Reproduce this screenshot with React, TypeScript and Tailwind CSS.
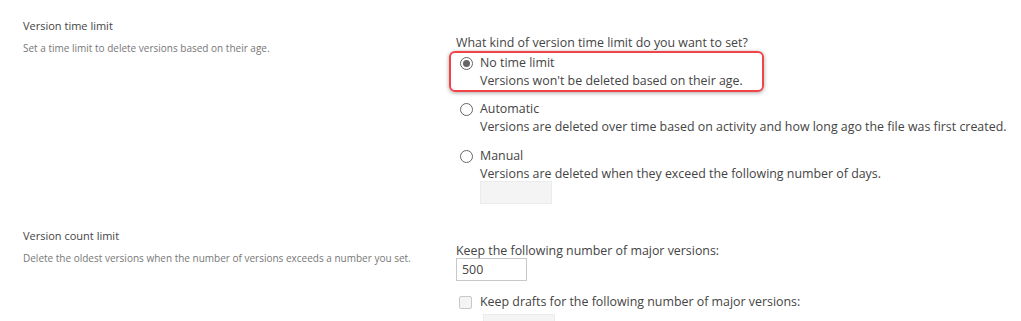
export default function App() {
  return (
    <main className="w-[1021px] h-[321px] overflow-hidden bg-white text-[#444] font-['Open_Sans',sans-serif]">
      {/* time limit section */}
      <section className="flex pt-[17px]">
        <div className="w-[456px] pl-[23px]">
          <h2 className="text-[11px] leading-[18px] text-[#444]">Version time limit</h2>
          <p className="mt-[5px] text-[10px] leading-[16px] text-[#777]">Set a time limit to delete versions based on their age.</p>
        </div>
        <div className="pt-[17px] text-[12.4px] leading-[18px]">
          <p>What kind of version time limit do you want to set?</p>
          <div className="ml-[-7px] mt-[-1px] w-[315px] rounded-[6px] border-[2.5px] border-[#f04448] pl-[5px] pt-[1px] pb-0 shadow-[0_1px_4px_rgba(0,0,0,0.35)]">
            <Radio checked label="No time limit" desc="Versions won't be deleted based on their age." />
          </div>
          <div className="mt-[8px]">
            <Radio label="Automatic" desc="Versions are deleted over time based on activity and how long ago the file was first created." />
          </div>
          <div className="mt-[11px]">
            <Radio label="Manual" desc="Versions are deleted when they exceed the following number of days." />
            <div className="ml-[24px] mt-[-2px] w-[72px] h-[23px] bg-[#f4f4f4] border border-[#ececec]" />
          </div>
        </div>
      </section>

      {/* count limit section */}
      <section className="flex pt-[23px]">
        <div className="w-[456px] pl-[23px]">
          <h2 className="text-[11px] leading-[18px] text-[#444]">Version count limit</h2>
          <p className="mt-[5px] text-[10px] leading-[16px] text-[#777]">Delete the oldest versions when the number of versions exceeds a number you set.</p>
        </div>
        <div className="pt-[15px] text-[12.4px] leading-[18px]">
          <p>Keep the following number of major versions:</p>
          <div className="mt-[-2px] w-[71px] h-[23px] border border-[#c8c8c8] px-[5px] leading-[21px]">500</div>
          <div className="mt-[12px] flex items-center">
            <span className="ml-[3px] w-[13px] h-[13px] rounded-[2px] border border-[#c8c8c8] bg-[#f4f4f4]" />
            <span className="ml-[8px]">Keep drafts for the following number of major versions:</span>
          </div>
          <div className="ml-[27px] mt-[3px] w-[72px] h-[23px] bg-[#f4f4f4] border border-[#ececec]" />
        </div>
      </section>
    </main>
  )
}

function Radio({ checked, label, desc }: { checked?: boolean; label: string; desc: string }) {
  return (
    <div className="flex">
      <div className="w-[24px] pt-[3px]">
        <span className="flex items-center justify-center w-[13px] h-[13px] rounded-full border border-[#666] bg-white ml-[4px]">
          {checked && <span className="w-[7px] h-[7px] rounded-full bg-[#666]" />}
        </span>
      </div>
      <div>
        <p>{label}</p>
        <p>{desc}</p>
      </div>
    </div>
  )
}
